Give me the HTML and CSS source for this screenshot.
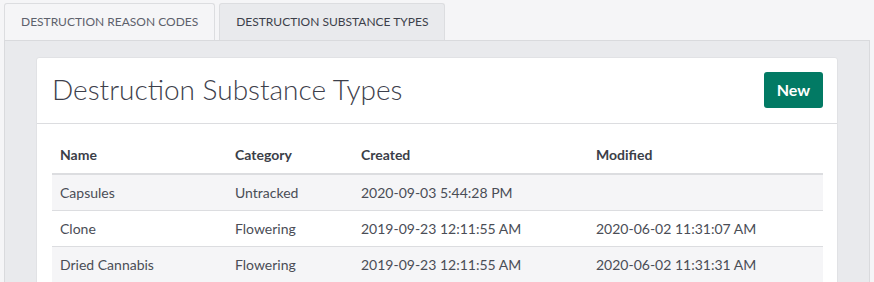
FILE: index.html
```html
<!DOCTYPE html>
<html lang="en">
<head>
    <meta charset="UTF-8">
    <title>Destruction Substance Types</title>
    <link rel="stylesheet" href="styles.css">
</head>
<body>
    <div class="tabs">
        <div class="tab">Destruction Reason Codes</div>
        <div class="tab active">Destruction Substance Types</div>
    </div>

    <div class="tab-panel">
        <div class="card">
            <div class="card-header">
                <h1>Destruction Substance Types</h1>
                <button class="btn-new">New</button>
            </div>
            <div class="card-body">
                <table>
                    <colgroup>
                        <col class="col-name">
                        <col class="col-category">
                        <col class="col-created">
                        <col>
                    </colgroup>
                    <thead>
                        <tr><th>Name</th><th>Category</th><th>Created</th><th>Modified</th></tr>
                    </thead>
                    <tbody>
                        <tr><td>Capsules</td><td>Untracked</td><td>2020-09-03 5:44:28 PM</td><td></td></tr>
                        <tr><td>Clone</td><td>Flowering</td><td>2019-09-23 12:11:55 AM</td><td>2020-06-02 11:31:07 AM</td></tr>
                        <tr><td>Dried Cannabis</td><td>Flowering</td><td>2019-09-23 12:11:55 AM</td><td>2020-06-02 11:31:31 AM</td></tr>
                    </tbody>
                </table>
            </div>
        </div>
    </div>
</body>
</html>
```

FILE: styles.css
```css
body {
    margin: 0;
    padding: 3px 4px 0;
    background-color: #f5f5f7;
    font-family: 'Lato', 'Liberation Sans', sans-serif;
    color: #4a4d56;
    overflow: hidden;
}
.tabs {
    display: flex;
    gap: 4px;
}
.tab {
    height: 36px;
    line-height: 36px;
    padding: 0 16px;
    border: 1px solid #dcdde0;
    border-bottom: none;
    border-radius: 3px 3px 0 0;
    background: #f5f5f7;
    color: #5d616c;
    font-size: 12px;
    text-transform: uppercase;
}
.tab.active {
    background: #e9eaed;
    color: #3c3f4a;
}
.tab-panel {
    background: #e9eaed;
    border: 1px solid #d9dadd;
    padding: 16px 31px 40px;
}
.card {
    background: #ffffff;
    border: 1px solid #e1e2e5;
    border-radius: 3px;
}
.card-header {
    display: flex;
    justify-content: space-between;
    align-items: center;
    height: 65px;
    padding: 0 14px 0 15px;
    border-bottom: 1px solid #dcdde0;
}
h1 {
    margin: -4px 0 0;
    font-size: 28px;
    font-weight: 300;
    color: #3d404b;
}
.btn-new {
    height: 36px;
    margin-top: -2px;
    padding: 0 13px;
    border: none;
    border-radius: 3px;
    background: #027a64;
    color: white;
    font-family: inherit;
    font-size: 16px;
    font-weight: bold;
}
.card-body {
    padding: 13px 14px 16px 15px;
}
table {
    width: 100%;
    border-collapse: collapse;
    font-size: 14px;
}
.col-name { width: 175px; }
.col-category { width: 126px; }
.col-created { width: 235px; }
th, td {
    text-align: left;
    padding: 8px;
    line-height: 19px;
}
th {
    padding-bottom: 9px;
    color: #3b3e48;
    font-weight: bold;
    border-bottom: 2px solid #dcdde0;
}
td {
    border-top: 1px solid #dcdde0;
}
tbody tr:first-child td { border-top: none; }
tbody tr:nth-child(odd) {
    background: #f5f5f7;
}
```
